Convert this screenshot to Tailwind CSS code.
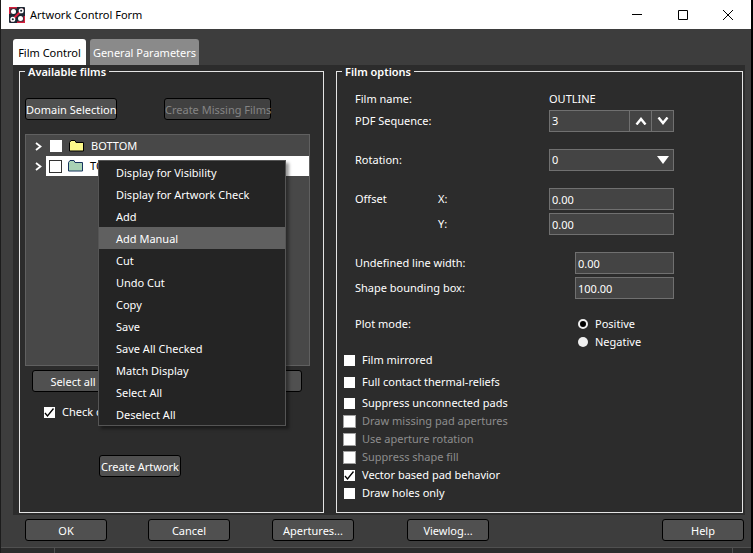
<!DOCTYPE html>
<html lang="en">
<head>
    <meta charset="UTF-8">
    <meta name="viewport" content="width=device-width, initial-scale=1.0">
    <title>Artwork Control Form</title>
    <script src="https://cdn.jsdelivr.net/npm/@tailwindcss/browser@4"></script>
</head>
<body class="min-h-screen flex flex-col overflow-hidden bg-[#3d3d3d] border-l border-l-[#1c1c1c] border-r-2 border-r-black font-['Noto_Sans','Open_Sans',sans-serif] text-[11px] leading-4 text-white">
    <header class="flex items-center h-[29px] pl-2 bg-white text-black">
        <svg class="w-4 h-4 mr-[5px]" viewBox="0 0 16 16">
            <rect width="16" height="16" rx="1" fill="#1d2733"/>
            <path d="M.7 7V.7H8M15.300 9V15.300H8" stroke="#d5213d" stroke-width="1.400" fill="none"/>
            <path d="M2 14L14 2" stroke="#e0213f" stroke-width="2"/>
            <circle cx="4.500" cy="4.500" r="2.500" fill="#fff"/>
            <circle cx="11.500" cy="11.500" r="2.500" fill="#fff"/>
            <circle cx="12.200" cy="3.800" r="1.800" fill="#1d2733" stroke="#fff" stroke-width="1.500"/>
            <circle cx="3.800" cy="12.200" r="1.800" fill="#1d2733" stroke="#fff" stroke-width="1.500"/>
        </svg>
        <h1 class="flex-1 text-[11px]">Artwork Control Form</h1>
        <div class="flex h-full">
            <button aria-label="Minimize" class="w-[46px] grid place-items-center">
                <svg class="w-[10px] h-[10px]" viewBox="0 0 10 10"><path d="M0 4.500H10" stroke="#000"/></svg>
            </button>
            <button aria-label="Maximize" class="w-[45px] grid place-items-center">
                <svg class="w-[10px] h-[10px]" viewBox="0 0 10 10"><path d="M.5.5h9v9h-9z" stroke="#000" fill="none"/></svg>
            </button>
            <button aria-label="Close" class="w-[46px] grid place-items-center">
                <svg class="w-[10px] h-[10px]" viewBox="0 0 10 10"><path d="M0 0L10 10M10 0L0 10" stroke="#000"/></svg>
            </button>
        </div>
    </header>

    <main class="pl-3 pt-[10px] pr-[6px]">
        <div role="tablist" class="flex gap-1">
            <button role="tab" aria-selected="true" class="h-[26px] w-[73px] pt-px rounded-t-[3px] whitespace-nowrap bg-white text-black">Film Control</button>
            <button role="tab" aria-selected="false" class="h-[26px] w-[109px] pt-px rounded-t-[3px] whitespace-nowrap bg-[#8a8a8a]">General Parameters</button>
        </div>

        <div class="flex items-stretch gap-3 h-[450px] pl-[6px] pr-[2px] pt-[6px] pb-[2px] bg-[#2c2c2c]">
            <section class="w-[305px] border border-[#e4e4e4] px-[5px]">
                <h2 class="w-fit -mt-[6px] px-[3px] bg-[#2c2c2c] font-semibold leading-3">Available films</h2>

                <div class="flex justify-between mt-5 pr-[47px]">
                    <button class="h-[22px] w-[92px] pt-px rounded-[3px] border border-black whitespace-nowrap bg-[#505050]">Domain Selection</button>
                    <button disabled class="h-[22px] w-[107px] pt-px rounded-[3px] border border-black whitespace-nowrap bg-[#404040] text-[#848484]">Create Missing Films</button>
                </div>

                <div class="relative w-[285px] h-[232px] mt-[14px] pt-px border border-[#606060] bg-[#484848]">
                    <div class="flex items-center h-5 pl-[9px]">
                        <svg class="w-[7px] h-[9px] mr-2" viewBox="0 0 7 9"><path d="M1 1L5.500 4.500L1 8" stroke="#fff" stroke-width="1.800" fill="none"/></svg>
                        <input type="checkbox" aria-label="BOTTOM" class="appearance-none w-3 h-3 mr-[7px] bg-white">
                        <svg class="w-[15px] h-3 mr-[7px]" viewBox="0 0 15 12"><path d="M.5 11V2.500L2 .5H6L7 2.500H14.500V11z" fill="#fdf98a" stroke="#000"/></svg>
                        <span>BOTTOM</span>
                    </div>
                    <div class="flex items-center h-5 pl-[9px]">
                        <svg class="w-[7px] h-[9px] mr-1" viewBox="0 0 7 9"><path d="M1 1L5.500 4.500L1 8" stroke="#fff" stroke-width="1.800" fill="none"/></svg>
                        <div class="flex items-center flex-1 h-5 pl-[3px] bg-white text-black">
                            <input type="checkbox" aria-label="TOP" class="appearance-none w-[13px] h-[13px] mr-[6px] border border-[#333] bg-white">
                            <svg class="w-[15px] h-3 mr-[7px]" viewBox="0 0 15 12"><path d="M.5 11V2.500L2 .5H6L7 2.500H14.500V11z" fill="#a9d3b5" stroke="#17355f"/></svg>
                            <span>TOP</span>
                        </div>
                    </div>

                    <!-- context menu -->
                    <menu class="absolute left-[72px] top-[25px] w-[188px] border border-[#555] bg-[#242424] shadow-[3px_3px_3px_rgba(0,0,0,0.4)]">
                        <li><button class="block w-full h-[22px] pt-px pl-[17px] text-left">Display for Visibility</button></li>
                        <li><button class="block w-full h-[22px] pt-px pl-[17px] text-left">Display for Artwork Check</button></li>
                        <li><button class="block w-full h-[22px] pt-px pl-[17px] text-left">Add</button></li>
                        <li><button class="block w-full h-[22px] pt-px pl-[17px] text-left bg-[#606060]">Add Manual</button></li>
                        <li><button class="block w-full h-[22px] pt-px pl-[17px] text-left">Cut</button></li>
                        <li><button class="block w-full h-[22px] pt-px pl-[17px] text-left">Undo Cut</button></li>
                        <li><button class="block w-full h-[22px] pt-px pl-[17px] text-left">Copy</button></li>
                        <li><button class="block w-full h-[22px] pt-px pl-[17px] text-left">Save</button></li>
                        <li><button class="block w-full h-[22px] pt-px pl-[17px] text-left">Save All Checked</button></li>
                        <li><button class="block w-full h-[22px] pt-px pl-[17px] text-left">Match Display</button></li>
                        <li><button class="block w-full h-[22px] pt-px pl-[17px] text-left">Select All</button></li>
                        <li><button class="block w-full h-[22px] pt-px pl-[17px] text-left">Deselect All</button></li>
                    </menu>
                </div>

                <div class="flex justify-between w-[270px] mt-1 ml-[7px]">
                    <button class="h-[22px] w-[82px] pt-px rounded-[3px] border border-black bg-[#505050]">Select all</button>
                    <button aria-label="Load" class="h-[22px] w-[82px] rounded-[3px] border border-black bg-[#505050]"></button>
                </div>

                <label class="flex items-center gap-[7px] w-fit h-[18px] mt-[11px] ml-[19px]">
                    <input type="checkbox" checked class="peer sr-only">
                    <svg class="w-[11px] h-[11px] bg-white" viewBox="0 0 11 11"><path d="M1 6L3.500 9L9.500 1.500" stroke="#000" stroke-width="1.300" fill="none"/></svg>
                    Check d
                </label>

                <button class="block h-[22px] w-[82px] mt-[34px] ml-[74px] pt-px rounded-[3px] border border-black whitespace-nowrap bg-[#505050]">Create Artwork</button>
            </section>

            <section class="flex-1 border border-[#e4e4e4] px-[5px]">
                <h2 class="w-fit -mt-[6px] px-[3px] bg-[#2c2c2c] font-semibold leading-3">Film options</h2>

                <div class="grid grid-cols-[83px_111px_125px] items-center pl-[13px] mt-[13px]">
                    <span class="col-span-2">Film name:</span>
                    <span>OUTLINE</span>

                    <label for="sequence" class="col-span-2">PDF Sequence:</label>
                    <div class="flex h-[22px] my-[3px] border border-[#707070] bg-[#444]">
                        <input id="sequence" value="3" class="flex-1 min-w-0 px-[2px] outline-none">
                        <button aria-label="Increase" class="w-[22px] grid place-items-center border-l border-[#707070]">
                            <svg class="w-3 h-2" viewBox="0 0 12 8"><path d="M1.500 7.500L6 2L10.500 7.500" stroke="#fff" stroke-width="2.400" fill="none"/></svg>
                        </button>
                        <button aria-label="Decrease" class="w-[22px] grid place-items-center border-l border-[#707070]">
                            <svg class="w-3 h-2" viewBox="0 0 12 8"><path d="M1.500 .5L6 6L10.500 .5" stroke="#fff" stroke-width="2.400" fill="none"/></svg>
                        </button>
                    </div>

                    <label for="rotation" class="col-span-2 mt-[14px]">Rotation:</label>
                    <div class="relative mt-[14px]">
                        <select id="rotation" class="appearance-none block w-full h-[22px] px-[2px] border border-[#707070] bg-[#444]">
                            <option>0</option>
                        </select>
                        <svg class="absolute right-[5px] top-[7px] w-3 h-2 pointer-events-none" viewBox="0 0 12 8"><path d="M0 0H12L6 8z" fill="#fff"/></svg>
                    </div>

                    <span class="mt-[17px]">Offset</span>
                    <label for="offset-x" class="mt-[17px]">X:</label>
                    <input id="offset-x" value="0.00" class="h-[22px] min-w-0 mt-[17px] px-[2px] border border-[#707070] bg-[#444]">
                    <label for="offset-y" class="col-start-2 mt-[3px]">Y:</label>
                    <input id="offset-y" value="0.00" class="h-[22px] min-w-0 mt-[3px] px-[2px] border border-[#707070] bg-[#444]">

                    <label for="line-width" class="col-span-2 mt-[17px]">Undefined line width:</label>
                    <input id="line-width" value="0.00" class="h-[22px] min-w-0 mt-[17px] ml-[26px] px-[2px] border border-[#707070] bg-[#444]">
                    <label for="bounding-box" class="col-span-2 mt-[3px]">Shape bounding box:</label>
                    <input id="bounding-box" value="100.00" class="h-[22px] min-w-0 mt-[3px] ml-[26px] px-[2px] border border-[#707070] bg-[#444]">

                    <span class="col-span-2 mt-4">Plot mode:</span>
                    <label class="flex items-center gap-[7px] h-[18px] mt-4 ml-[29px]">
                        <input type="radio" name="plot" checked class="appearance-none w-[10px] h-[10px] rounded-full border-2 border-[#f0f0f0] bg-black">
                        Positive
                    </label>
                    <label class="col-start-3 flex items-center gap-[7px] h-[18px] ml-[29px]">
                        <input type="radio" name="plot" class="appearance-none w-[10px] h-[10px] rounded-full bg-[#f0f0f0]">
                        Negative
                    </label>
                </div>

                <div class="flex flex-col items-start pl-[2px]">
                    <label class="flex items-center gap-[7px] h-[18px]"><input type="checkbox" class="appearance-none w-[11px] h-[11px] bg-white">Film mirrored</label>
                    <label class="flex items-center gap-[7px] h-[18px] mt-1"><input type="checkbox" class="appearance-none w-[11px] h-[11px] bg-white">Full contact thermal-reliefs</label>
                    <label class="flex items-center gap-[7px] h-[18px] mt-[3px]"><input type="checkbox" class="appearance-none w-[11px] h-[11px] bg-white">Suppress unconnected pads</label>
                    <label class="flex items-center gap-[7px] h-[18px] text-[#8c8c8c]"><input type="checkbox" disabled class="appearance-none w-[11px] h-[11px] bg-white outline outline-[#a0a0a0]">Draw missing pad apertures</label>
                    <label class="flex items-center gap-[7px] h-[18px] text-[#8c8c8c]"><input type="checkbox" disabled class="appearance-none w-[11px] h-[11px] bg-white outline outline-[#a0a0a0]">Use aperture rotation</label>
                    <label class="flex items-center gap-[7px] h-[18px] text-[#8c8c8c]"><input type="checkbox" disabled class="appearance-none w-[11px] h-[11px] bg-white outline outline-[#a0a0a0]">Suppress shape fill</label>
                    <label class="flex items-center gap-[7px] h-[18px]">
                        <input type="checkbox" checked class="peer sr-only">
                        <svg class="w-[11px] h-[11px] bg-white" viewBox="0 0 11 11"><path d="M1 6L3.500 9L9.500 1.500" stroke="#000" stroke-width="1.300" fill="none"/></svg>
                        Vector based pad behavior
                    </label>
                    <label class="flex items-center gap-[7px] h-[18px]"><input type="checkbox" class="appearance-none w-[11px] h-[11px] bg-white">Draw holes only</label>
                </div>
            </section>
        </div>
    </main>

    <footer class="flex items-center pt-1 pb-[6px] pl-6 pr-[7px]">
        <button class="h-[22px] w-[82px] pt-px rounded-[3px] border border-black bg-[#505050]">OK</button>
        <button class="h-[22px] w-[82px] pt-px ml-[41px] rounded-[3px] border border-black bg-[#505050]">Cancel</button>
        <button class="h-[22px] w-[82px] pt-px ml-[42px] rounded-[3px] border border-black bg-[#505050]">Apertures...</button>
        <button class="h-[22px] w-[82px] pt-px ml-[53px] rounded-[3px] border border-black bg-[#505050]">Viewlog...</button>
        <button class="h-[22px] w-[82px] pt-px ml-auto rounded-[3px] border border-black bg-[#505050]">Help</button>
    </footer>
    <div class="flex flex-1 justify-between border-t border-[#505050] bg-[#2c2c2c]">
        <div class="w-[54px] border-r border-[#505050]"></div>
        <div class="w-[19px] border-l border-[#505050]"></div>
    </div>
</body>
</html>
